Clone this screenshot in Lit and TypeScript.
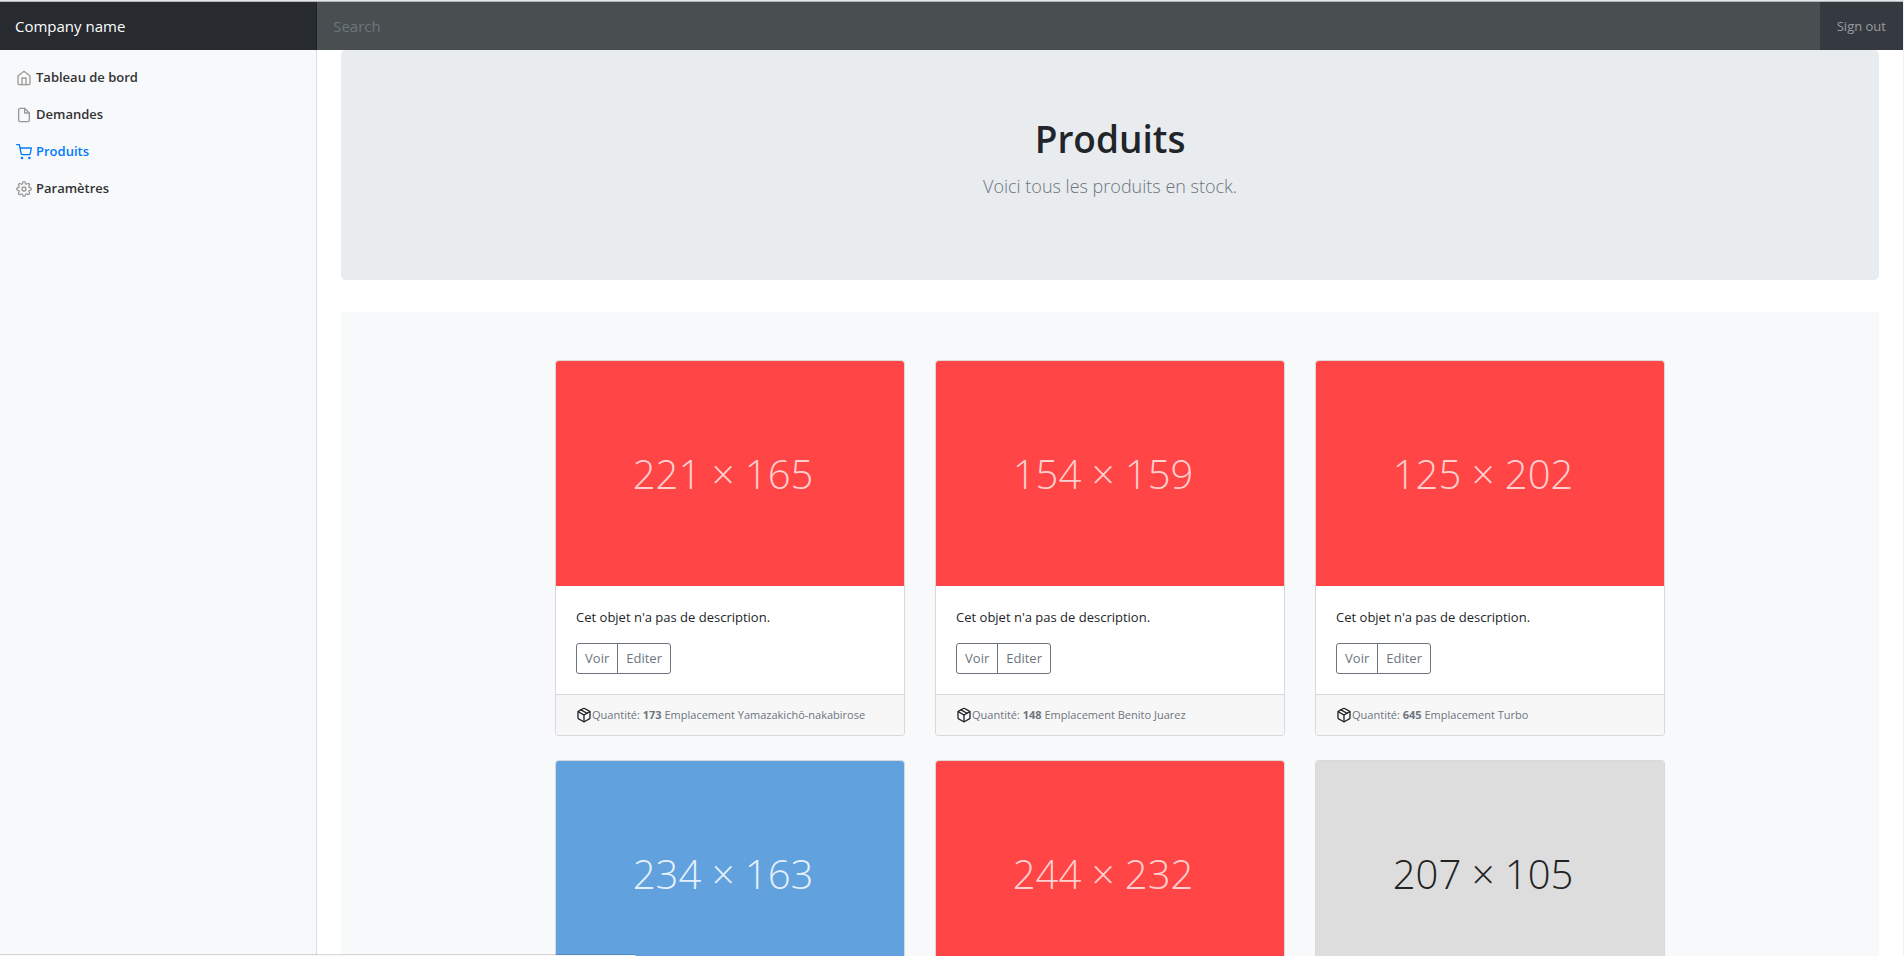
import { LitElement, html, css, svg, nothing } from "lit";
import { customElement, property } from "lit/decorators.js";
import { classMap } from "lit/directives/class-map.js";

const icons = {
  home: svg`<path d="M3 9l9-7 9 7v11a2 2 0 0 1-2 2H5a2 2 0 0 1-2-2z"/><polyline points="9 22 9 12 15 12 15 22"/>`,
  file: svg`<path d="M13 2H6a2 2 0 0 0-2 2v16a2 2 0 0 0 2 2h12a2 2 0 0 0 2-2V9z"/><polyline points="13 2 13 9 20 9"/>`,
  cart: svg`<circle cx="9" cy="21" r="1"/><circle cx="20" cy="21" r="1"/><path d="M1 1h4l2.68 13.39a2 2 0 0 0 2 1.61h9.72a2 2 0 0 0 2-1.61L23 6H6"/>`,
  settings: svg`<circle cx="12" cy="12" r="3"/><path d="M19.4 15a1.65 1.65 0 0 0 .33 1.82l.06.06a2 2 0 0 1 0 2.83 2 2 0 0 1-2.83 0l-.06-.06a1.65 1.65 0 0 0-1.82-.33 1.65 1.65 0 0 0-1 1.51V21a2 2 0 0 1-2 2 2 2 0 0 1-2-2v-.09A1.65 1.65 0 0 0 9 19.4a1.65 1.65 0 0 0-1.82.33l-.06.06a2 2 0 0 1-2.83 0 2 2 0 0 1 0-2.83l.06-.06a1.65 1.65 0 0 0 .33-1.82 1.65 1.65 0 0 0-1.51-1H3a2 2 0 0 1-2-2 2 2 0 0 1 2-2h.09A1.65 1.65 0 0 0 4.6 9a1.65 1.65 0 0 0-.33-1.82l-.06-.06a2 2 0 0 1 0-2.83 2 2 0 0 1 2.83 0l.06.06a1.65 1.65 0 0 0 1.82.33H9a1.65 1.65 0 0 0 1-1.51V3a2 2 0 0 1 2-2 2 2 0 0 1 2 2v.09a1.65 1.65 0 0 0 1 1.51 1.65 1.65 0 0 0 1.82-.33l.06-.06a2 2 0 0 1 2.83 0 2 2 0 0 1 0 2.83l-.06.06a1.65 1.65 0 0 0-.33 1.82V9a1.65 1.65 0 0 0 1.51 1H21a2 2 0 0 1 2 2 2 2 0 0 1-2 2h-.09a1.65 1.65 0 0 0-1.51 1z"/>`,
  box: svg`<line x1="16.5" y1="9.4" x2="7.5" y2="4.21"/><path d="M21 16V8a2 2 0 0 0-1-1.73l-7-4a2 2 0 0 0-2 0l-7 4A2 2 0 0 0 3 8v8a2 2 0 0 0 1 1.73l7 4a2 2 0 0 0 2 0l7-4A2 2 0 0 0 21 16z"/><polyline points="3.27 6.96 12 12.01 20.73 6.96"/><line x1="12" y1="22.08" x2="12" y2="12"/>`,
};

type IconName = keyof typeof icons;

const icon = (name: IconName) => html`<svg
  class="icon"
  viewBox="0 0 24 24"
  width="16"
  height="16"
  fill="none"
  stroke="currentColor"
  stroke-width="2"
  stroke-linecap="round"
  stroke-linejoin="round"
  aria-hidden="true"
>${icons[name]}</svg>`;

interface Product {
  size: string;
  tone: "red" | "blue" | "grey";
  stock?: { quantity: number; place: string };
}

const products: Product[] = [
  { size: "221 × 165", tone: "red", stock: { quantity: 173, place: "Yamazakichō-nakabirose" } },
  { size: "154 × 159", tone: "red", stock: { quantity: 148, place: "Benito Juarez" } },
  { size: "125 × 202", tone: "red", stock: { quantity: 645, place: "Turbo" } },
  { size: "234 × 163", tone: "blue" },
  { size: "244 × 232", tone: "red" },
  { size: "207 × 105", tone: "grey" },
];

const links: { label: string; icon: IconName; active?: boolean }[] = [
  { label: "Tableau de bord", icon: "home" },
  { label: "Demandes", icon: "file" },
  { label: "Produits", icon: "cart", active: true },
  { label: "Paramètres", icon: "settings" },
];

@customElement("product-card")
export class ProductCard extends LitElement {
  @property({ attribute: false }) product!: Product;

  static styles = css`
    :host {
      display: block;
      box-sizing: border-box;
      overflow: hidden;
      border: 1px solid rgba(0, 0, 0, 0.125);
      border-radius: 4px;
      background: #fff;
      background-clip: padding-box;
    }
    .picture {
      display: flex;
      align-items: center;
      justify-content: center;
      height: 225px;
      padding-right: 14px;
      font-size: 40px;
      font-weight: 300;
    }
    .red {
      background: #ff4545;
      color: #ffd0d0;
    }
    .blue {
      background: #60a1de;
      color: #e6f0fa;
    }
    .grey {
      background: #dddddd;
      color: #222222;
    }
    .body {
      padding: 21px 20px 20px;
    }
    .text {
      margin: 0 0 15px;
    }
    .actions {
      display: flex;
    }
    .button {
      padding: 4px 8px;
      border: 1px solid #6c757d;
      background: transparent;
      color: #6c757d;
      font: inherit;
      line-height: 21px;
      cursor: pointer;
    }
    .button:first-child {
      border-radius: 3px 0 0 3px;
    }
    .button:last-child {
      margin-left: -1px;
      border-radius: 0 3px 3px 0;
    }
    .footer {
      display: flex;
      align-items: center;
      padding: 12px 20px;
      border-top: 1px solid rgba(0, 0, 0, 0.125);
      background: #f7f7f7;
      line-height: 16px;
    }
    .icon {
      flex: none;
    }
    .stock {
      color: #6c757d;
      font-size: 11px;
    }
  `;

  render() {
    const { size, tone, stock } = this.product;
    return html`
      <div class=${classMap({ picture: true, [tone]: true })}>${size}</div>
      ${stock
        ? html`
            <div class="body">
              <p class="text">Cet objet n'a pas de description.</p>
              <div class="actions">
                <button class="button" type="button">Voir</button>
                <button class="button" type="button">Editer</button>
              </div>
            </div>
            <div class="footer">
              ${icon("box")}
              <span class="stock">Quantité: <b>${stock.quantity}</b> Emplacement ${stock.place}</span>
            </div>
          `
        : nothing}
    `;
  }
}

@customElement("app-root")
export class AppRoot extends LitElement {
  static styles = css`
    :host {
      display: flex;
      flex-direction: column;
      box-sizing: border-box;
      height: 100vh;
      overflow: hidden;
      border-top: 1px solid #e4e7e9;
      border-right: 1px solid #f1f1f1;
      background: #fff;
      color: #212529;
      font-family: "Open Sans", "Noto Sans", sans-serif;
      font-size: 13px;
      line-height: 21px;
    }
    a {
      color: inherit;
      text-decoration: none;
    }
    .navbar {
      display: grid;
      grid-template-columns: 1fr 5fr;
      flex: none;
      height: 48px;
      border-top: 1px solid #b4b7b9;
      background: #343a40;
    }
    .brand {
      padding: 12px 15px;
      background: rgba(0, 0, 0, 0.25);
      box-shadow: inset -1px 0 0 rgba(0, 0, 0, 0.25);
      color: #fff;
      font-size: 15px;
      line-height: 24px;
    }
    .tools {
      display: flex;
    }
    .search {
      flex: 1;
      min-width: 0;
      padding: 12px 16px;
      border: 0;
      outline: 0;
      background: #494e51;
      color: #fff;
      font: inherit;
      font-size: 15px;
    }
    .search::placeholder {
      color: #6c757d;
      opacity: 1;
    }
    .signout {
      padding: 14px 17px 13px;
      color: #999c9f;
      line-height: 21px;
    }
    .layout {
      display: grid;
      grid-template-columns: 1fr 5fr;
      flex: 1;
      min-height: 0;
    }
    .sidebar {
      padding-top: 9px;
      background: #f8f9fb;
      box-shadow: inset -1px 0 0 rgba(0, 0, 0, 0.1);
    }
    .link {
      display: flex;
      align-items: center;
      gap: 4px;
      padding: 8px 16px;
      color: #333;
      font-weight: 600;
    }
    .link .icon {
      color: #999;
    }
    .link.active,
    .link.active .icon {
      color: #007bff;
    }
    .main {
      min-height: 0;
      overflow: hidden;
      padding: 0 24px;
    }
    .hero {
      margin-bottom: 32px;
      padding: 65px 32px 79px;
      border-radius: 5px;
      background: #e8ecef;
      text-align: center;
    }
    .title {
      margin: 0 0 8px;
      font-size: 37px;
      font-weight: 600;
      line-height: 48px;
    }
    .lead {
      margin: 0;
      color: #6c757d;
      font-size: 18px;
      font-weight: 300;
      line-height: 30px;
    }
    .album {
      padding: 48px 15px;
      background: #f8f9fb;
    }
    .cards {
      display: grid;
      grid-template-columns: repeat(3, 1fr);
      gap: 24px 30px;
      max-width: 1110px;
      margin: 0 auto;
    }
    .status {
      position: fixed;
      bottom: 0;
      left: 0;
      width: 33.4%;
      height: 1px;
      border-top: 1px solid rgba(0, 0, 0, 0.14);
      border-top-right-radius: 2px;
      background: #f5f6f7;
      background-clip: padding-box;
    }
  `;

  render() {
    return html`
      <header class="navbar">
        <a class="brand" href="#">Company name</a>
        <div class="tools">
          <input class="search" type="text" placeholder="Search" aria-label="Search" />
          <a class="signout" href="#">Sign out</a>
        </div>
      </header>
      <div class="layout">
        <nav class="sidebar">
          ${links.map(
            (link) => html`<a class=${classMap({ link: true, active: !!link.active })} href="#">
              ${icon(link.icon)}<span>${link.label}</span>
            </a>`,
          )}
        </nav>
        <main class="main">
          <section class="hero">
            <h1 class="title">Produits</h1>
            <p class="lead">Voici tous les produits en stock.</p>
          </section>
          <section class="album">
            <div class="cards">
              ${products.map((product) => html`<product-card .product=${product}></product-card>`)}
            </div>
          </section>
        </main>
      </div>
      <div class="status"></div>
    `;
  }
}
